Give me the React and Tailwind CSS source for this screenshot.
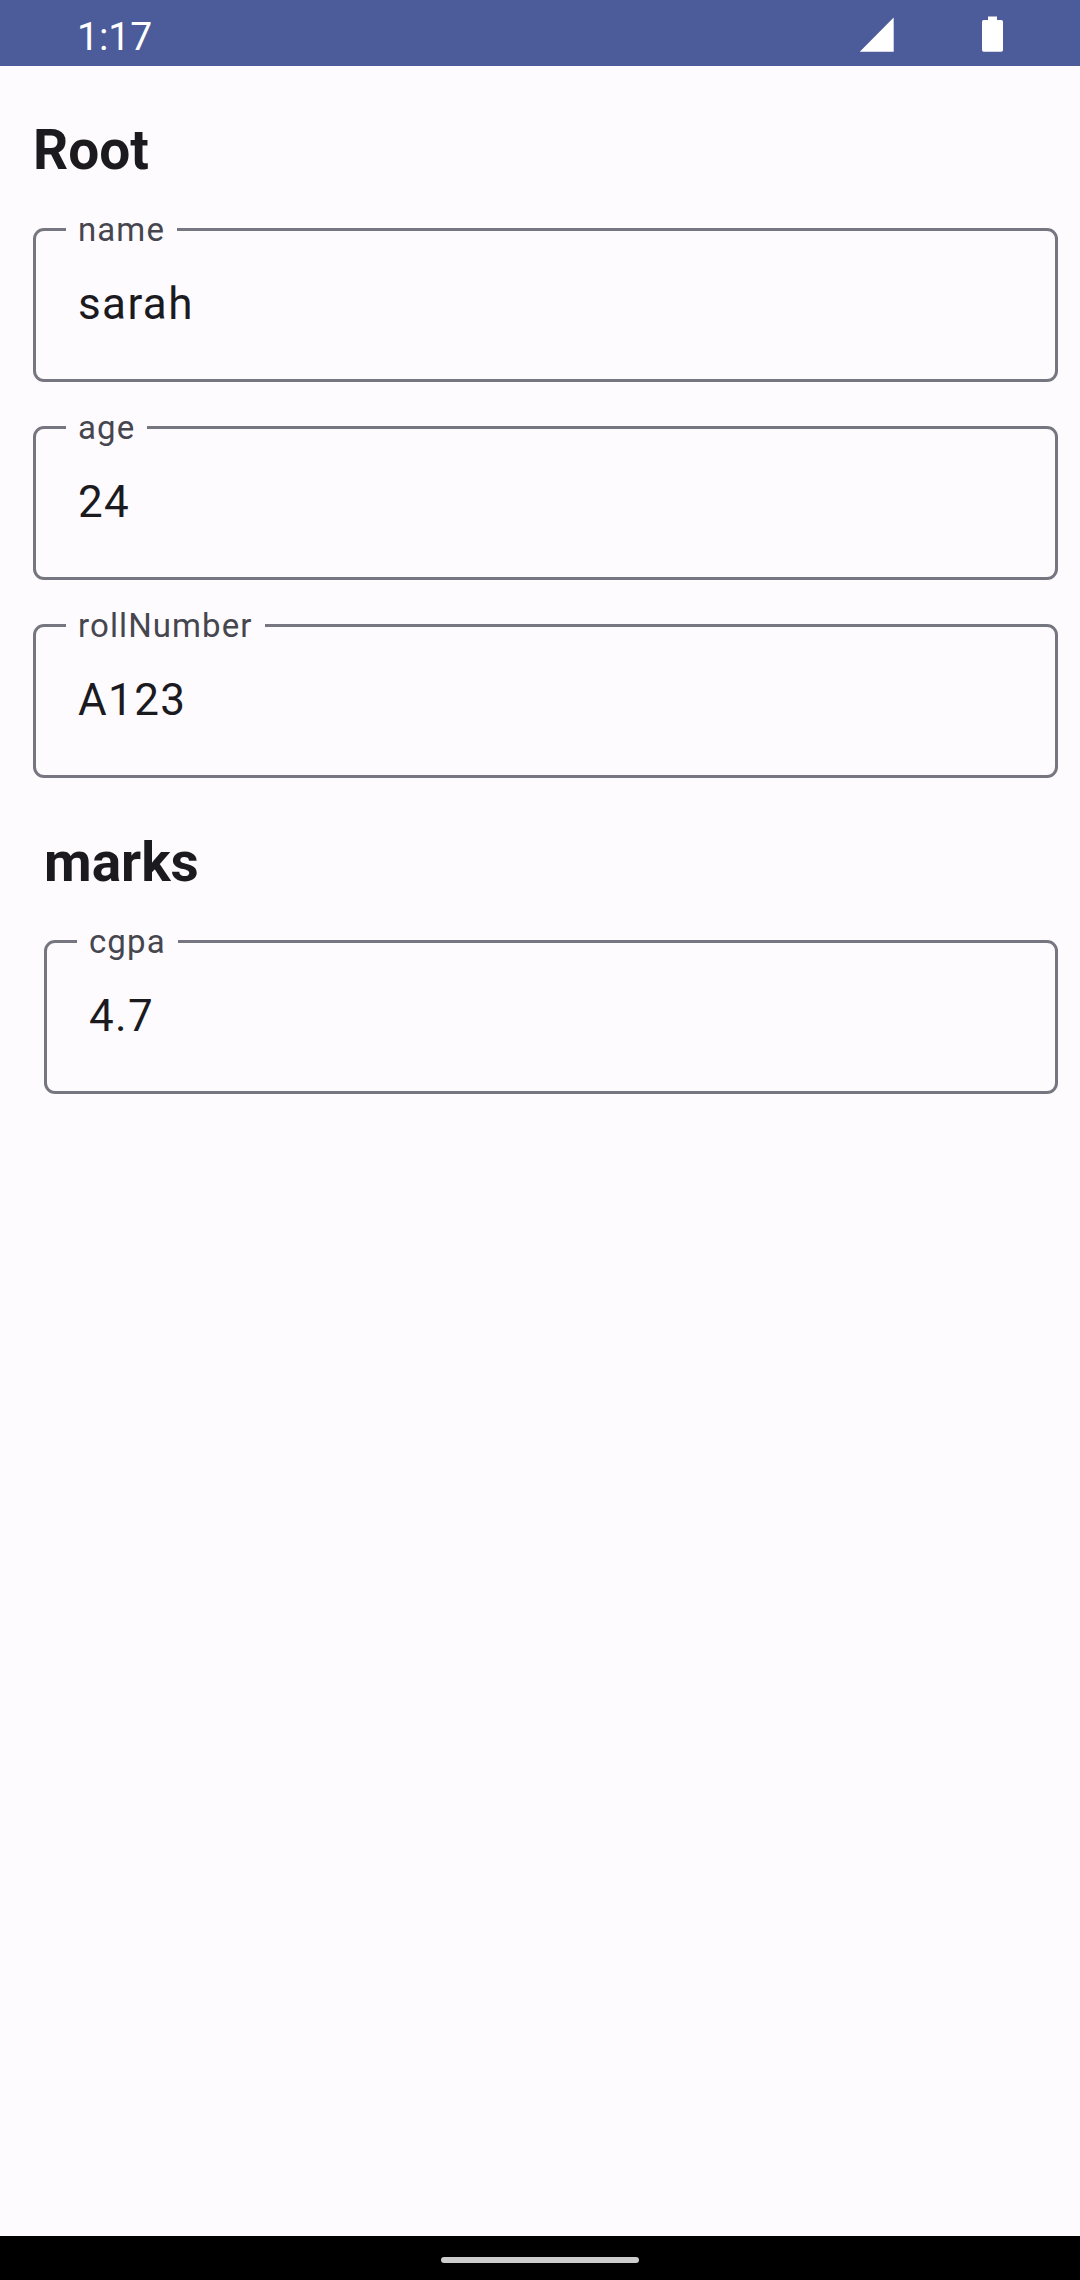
function StatusBar() {
  return (
    <header className="flex h-[66px] shrink-0 items-start justify-between bg-[#4c5b99] pl-[77px] pr-[77px] text-white">
      <span className="mt-[14px] text-[39px] leading-[46px]">1:17</span>
      <div className="flex items-start">
        <svg className="mt-[17px] mr-[88px] h-[35px] w-[34px]" viewBox="0 0 34 35" fill="currentColor">
          <path d="M33.7 0.5V34.7H-.3Z" />
        </svg>
        <svg className="mt-4 h-9 w-[21px]" viewBox="0 0 21 36" fill="currentColor">
          <path d="M6 .4H15V4H19.3Q21 4 21 5.7V33.9Q21 35.7 19.3 35.7H1.7Q0 35.7 0 33.9V5.7Q0 4 1.7 4H6Z" />
        </svg>
      </div>
    </header>
  );
}

function Field({ label, value }) {
  return (
    <div className="relative h-[154px] rounded-[11px] border-[3px] border-[#767680] pt-[44px] pl-[42px]">
      <label className="absolute -top-[23px] left-[30px] bg-[#fefbff] pr-[12px] pl-[12px] text-[33px] leading-[44px] tracking-[1.1px] text-[#46464f]">
        {label}
      </label>
      <div className="text-[44px] leading-[58px] tracking-[1.375px] text-[#1b1b1f]">{value}</div>
    </div>
  );
}

function Section({ title, fields }) {
  return (
    <section>
      <h2 className="mb-[45px] text-[55px] leading-[66px] font-bold text-[#1b1b1f]">{title}</h2>
      <div className="flex flex-col gap-[44px]">
        {fields.map(([label, value]) => (
          <Field key={label} label={label} value={value} />
        ))}
      </div>
    </section>
  );
}

export default function App() {
  return (
    <div className="flex h-[2280px] w-[1080px] flex-col overflow-hidden bg-[#fefbff] font-['Roboto',sans-serif]">
      <StatusBar />
      <main className="flex grow flex-col gap-[51px] pt-[51px] pr-[22px] pl-[33px]">
        <Section
          title="Root"
          fields={[
            ["name", "sarah"],
            ["age", "24"],
            ["rollNumber", "A123"],
          ]}
        />
        <div className="pl-[11px]">
          <Section title="marks" fields={[["cgpa", "4.7"]]} />
        </div>
      </main>
      <footer className="flex h-[44px] shrink-0 items-center justify-center bg-black pt-1">
        <div className="h-[6px] w-[198px] rounded-full bg-[#cccccc]" />
      </footer>
    </div>
  );
}
